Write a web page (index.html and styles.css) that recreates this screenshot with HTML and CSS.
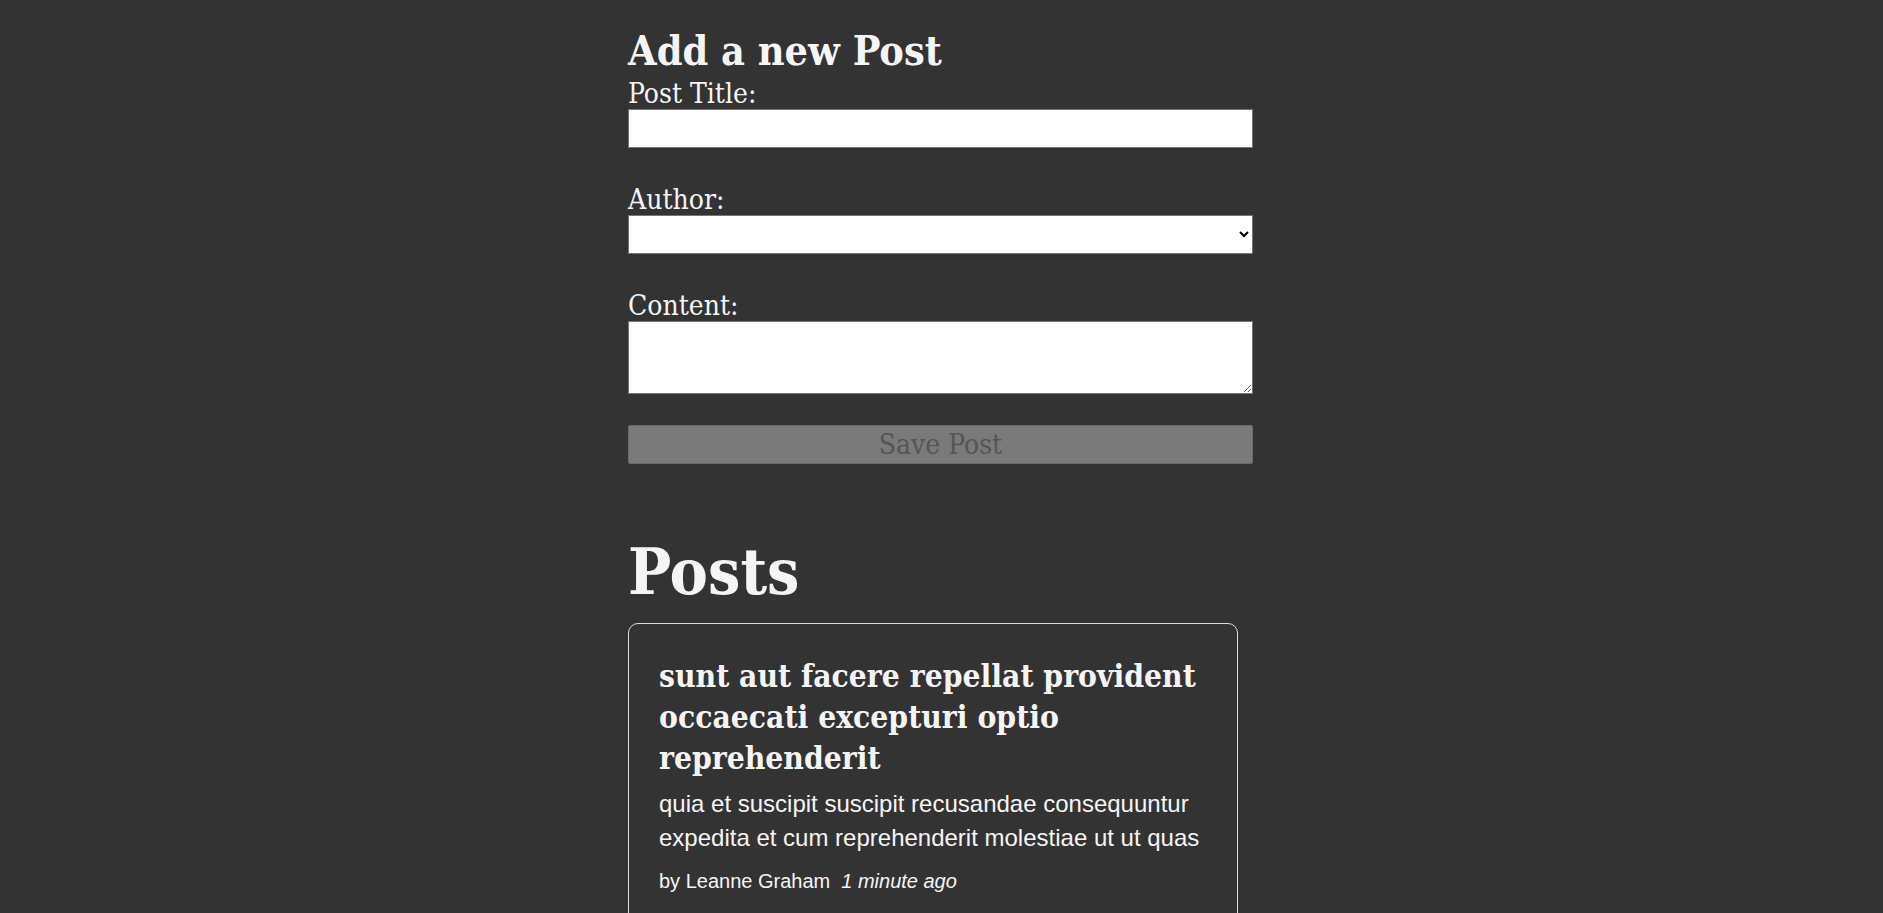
FILE: index.html
```html
<!DOCTYPE html>
<html lang="en">
<head>
<meta charset="utf-8">
<title>Posts</title>
<link rel="stylesheet" href="styles.css">
</head>
<body>
<main class="page">
  <section class="add-post">
    <h2 class="form-title">Add a new Post</h2>
    <form class="post-form">
      <div class="field">
        <label for="postTitle">Post Title:</label>
        <input type="text" id="postTitle" class="text-input">
      </div>
      <div class="field">
        <label for="postAuthor">Author:</label>
        <select id="postAuthor" class="select-input"><option value=""></option></select>
      </div>
      <div class="field">
        <label for="postContent">Content:</label>
        <textarea id="postContent" class="area-input"></textarea>
      </div>
      <button type="button" class="save-btn" disabled>Save Post</button>
    </form>
  </section>
  <section class="posts-list">
    <h1 class="posts-title">Posts</h1>
    <article class="post-card">
      <h3 class="post-heading">sunt aut facere repellat provident occaecati excepturi optio reprehenderit</h3>
      <p class="post-body">quia et suscipit suscipit recusandae consequuntur expedita et cum reprehenderit molestiae ut ut quas</p>
      <p class="post-meta"><span class="author">by Leanne Graham</span><i class="time">1 minute ago</i></p>
    </article>
  </section>
</main>
</body>
</html>
```
FILE: styles.css
```css
html, body {
  margin: 0;
  padding: 0;
}
body {
  background: #333333;
  color: #f5f5f5;
  font-family: "DejaVu Serif Condensed", "DejaVu Serif", serif;
  font-stretch: condensed;
}
.page {
  width: 627px;
  margin: 0 auto;
  padding-top: 27px;
}
.add-post,
.posts-list {
  width: 625px;
}
.form-title {
  font-size: 41px;
  line-height: 48px;
  font-weight: bold;
  margin: 0 0 3px;
}
.post-form {
  display: flex;
  flex-direction: column;
}
.field {
  display: flex;
  flex-direction: column;
  margin-bottom: 36px;
}
.field label {
  font-size: 28px;
  line-height: 31px;
}
.text-input,
.select-input,
.area-input {
  box-sizing: border-box;
  width: 100%;
  height: 39px;
  margin: 0;
  border: 1px solid #767676;
  background: #ffffff;
  font-family: "Liberation Sans", Arial, sans-serif;
  font-size: 16px;
}
.select-input {
  border-radius: 0;
}
.area-input {
  height: 73px;
}
.field:last-of-type {
  margin-bottom: 31px;
}
.save-btn {
  box-sizing: border-box;
  height: 39px;
  width: 100%;
  margin: 0;
  border: 1px solid #6a6a6a;
  border-radius: 2px;
  background: #7a7a7a;
  color: #555555;
  font-family: "DejaVu Serif Condensed", "DejaVu Serif", serif;
  font-stretch: condensed;
  font-size: 28px;
  line-height: 37px;
  padding: 0;
}
.posts-list {
  margin-top: 71px;
}
.posts-title {
  font-size: 64px;
  line-height: 74px;
  font-weight: bold;
  margin: 0 0 14px;
}
.post-card {
  width: 610px;
  box-sizing: border-box;
  border: 1px solid #dddddd;
  border-radius: 10px;
  padding: 31px 30px 30px;
}
.post-heading {
  font-size: 31.5px;
  line-height: 41px;
  font-weight: bold;
  margin: 0 0 9px;
}
.post-body {
  font-family: "Liberation Sans", Arial, sans-serif;
  font-size: 24px;
  line-height: 34px;
  margin: 0 0 12px;
}
.post-meta {
  font-family: "Liberation Sans", Arial, sans-serif;
  font-size: 20px;
  line-height: 28px;
  margin: 0;
}
.post-meta .time {
  margin-left: 11px;
}
```
